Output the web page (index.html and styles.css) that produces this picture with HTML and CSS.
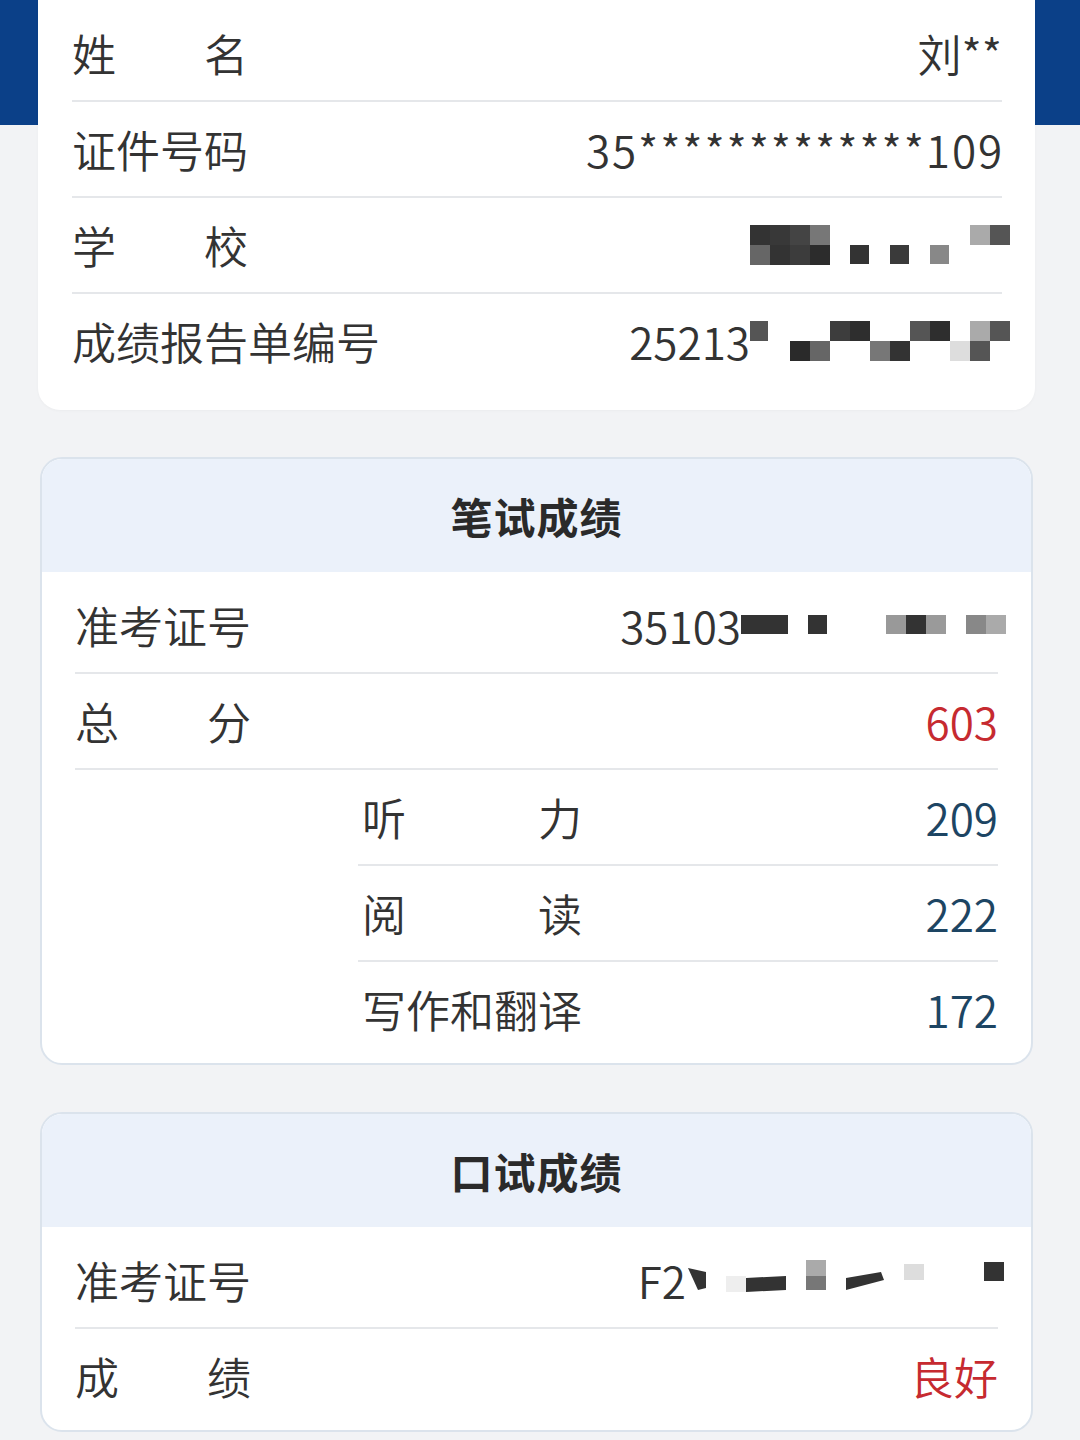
FILE: index.html
```html
<!DOCTYPE html>
<html lang="zh-CN">
<head>
<meta charset="utf-8">
<title>成绩查询</title>
<link rel="stylesheet" href="styles.css">
</head>
<body>
<div class="page">
  <section class="card card-info">
    <div class="row">
      <div class="lbl w4"><span>姓</span><span>名</span></div>
      <div class="val">刘**</div>
    </div>
    <div class="row">
      <div class="lbl">证件号码</div>
      <div class="val idno">35*************109</div>
    </div>
    <div class="row">
      <div class="lbl w4"><span>学</span><span>校</span></div>
      <div class="val">
        <svg class="mosaic" width="260" height="40" viewBox="0 0 260 40">
          <rect x="0" y="0" width="20" height="20" fill="#333"/>
          <rect x="20" y="0" width="20" height="20" fill="#383838"/>
          <rect x="40" y="0" width="20" height="20" fill="#444"/>
          <rect x="60" y="0" width="20" height="20" fill="#777"/>
          <rect x="220" y="0" width="20" height="20" fill="#aaa"/>
          <rect x="240" y="0" width="20" height="20" fill="#555"/>
          <rect x="0" y="20" width="20" height="20" fill="#666"/>
          <rect x="20" y="20" width="20" height="20" fill="#333"/>
          <rect x="40" y="20" width="20" height="20" fill="#3c3c3c"/>
          <rect x="60" y="20" width="20" height="20" fill="#2c2c2c"/>
          <rect x="100" y="20" width="19" height="19" fill="#333"/>
          <rect x="140" y="20" width="19" height="19" fill="#3a3a3a"/>
          <rect x="180" y="20" width="19" height="19" fill="#888"/>
        </svg>
      </div>
    </div>
    <div class="row">
      <div class="lbl">成绩报告单编号</div>
      <div class="val">25213<svg class="mosaic" width="260" height="40" viewBox="0 0 260 40">
          <rect x="0" y="0" width="18" height="20" fill="#555"/>
          <rect x="40" y="20" width="20" height="20" fill="#2a2a2a"/>
          <rect x="60" y="20" width="20" height="20" fill="#666"/>
          <rect x="80" y="0" width="20" height="20" fill="#3d3d3d"/>
          <rect x="100" y="0" width="20" height="20" fill="#2e2e2e"/>
          <rect x="120" y="20" width="20" height="20" fill="#777"/>
          <rect x="140" y="20" width="20" height="20" fill="#333"/>
          <rect x="160" y="0" width="20" height="20" fill="#555"/>
          <rect x="180" y="0" width="20" height="20" fill="#2e2e2e"/>
          <rect x="200" y="20" width="20" height="20" fill="#ddd"/>
          <rect x="220" y="0" width="20" height="20" fill="#aaa"/>
          <rect x="220" y="20" width="20" height="20" fill="#555"/>
          <rect x="240" y="0" width="20" height="20" fill="#555"/>
        </svg></div>
    </div>
  </section>

  <section class="card card-score">
    <header class="card-head">笔试成绩</header>
    <div class="card-body">
      <div class="row">
        <div class="lbl">准考证号</div>
        <div class="val">35103<svg class="mosaic" width="265" height="24" viewBox="0 0 265 24">
            <rect x="0" y="2" width="47" height="19" fill="#333"/>
            <rect x="67" y="2" width="19" height="19" fill="#333"/>
            <rect x="145" y="2" width="20" height="19" fill="#999"/>
            <rect x="165" y="2" width="20" height="19" fill="#333"/>
            <rect x="185" y="2" width="20" height="19" fill="#9a9a9a"/>
            <rect x="225" y="2" width="20" height="19" fill="#888"/>
            <rect x="245" y="2" width="20" height="19" fill="#aaa"/>
          </svg></div>
      </div>
      <div class="row">
        <div class="lbl w4"><span>总</span><span>分</span></div>
        <div class="val red">603</div>
      </div>
      <div class="sub">
        <div class="row">
          <div class="lbl w5"><span>听</span><span>力</span></div>
          <div class="val blue">209</div>
        </div>
        <div class="row">
          <div class="lbl w5"><span>阅</span><span>读</span></div>
          <div class="val blue">222</div>
        </div>
        <div class="row">
          <div class="lbl">写作和翻译</div>
          <div class="val blue">172</div>
        </div>
      </div>
    </div>
  </section>

  <section class="card card-score">
    <header class="card-head">口试成绩</header>
    <div class="card-body">
      <div class="row">
        <div class="lbl">准考证号</div>
        <div class="val">F2<svg class="mosaic" width="320" height="40" viewBox="0 0 320 40">
            <polygon points="2,8 20,12 20,28 12,30" fill="#333"/>
            <rect x="40" y="16" width="20" height="16" fill="#eee"/>
            <polygon points="60,18 100,16 100,30 60,32" fill="#333"/>
            <rect x="120" y="0" width="20" height="16" fill="#aaa"/>
            <rect x="120" y="16" width="20" height="14" fill="#777"/>
            <polygon points="160,18 195,12 198,20 160,30" fill="#333"/>
            <rect x="218" y="4" width="20" height="16" fill="#ddd"/>
            <rect x="298" y="2" width="20" height="19" fill="#333"/>
          </svg></div>
      </div>
      <div class="row">
        <div class="lbl w4"><span>成</span><span>绩</span></div>
        <div class="val red">良好</div>
      </div>
    </div>
  </section>
</div>
</body>
</html>
```

FILE: styles.css
```css
html, body {
  margin: 0;
  padding: 0;
}

body {
  background: linear-gradient(#0b4088 0, #0b4088 125px, #f2f3f5 125px);
  font-family: "Noto Sans CJK SC", "Noto Sans", sans-serif;
  color: #333;
  width: 1080px;
  min-height: 1440px;
}

.page {
  display: flex;
  flex-direction: column;
  padding-bottom: 40px;
}

.card {
  background: #fff;
}

.card-info {
  margin: 0 45px 0 38px;
  padding: 6px 33px 22px 34px;
  border-radius: 0 0 22px 22px;
  box-shadow: 0 1px 3px rgba(0, 0, 0, 0.03);
}

.card-score {
  margin: 47px 47px 0 40px;
  border: 2px solid #dbe3ec;
  border-radius: 22px;
  overflow: hidden;
}

.card-head {
  height: 113px;
  background: #ebf1fa;
  display: flex;
  align-items: center;
  justify-content: center;
  font-size: 42px;
  font-weight: 700;
  color: #2a2a2a;
  letter-spacing: 1px;
}

.card-body {
  padding: 6px 33px 7px 33px;
}

.row {
  height: 94px;
  display: flex;
  align-items: center;
  justify-content: space-between;
  border-bottom: 2px solid #e5e7ea;
  font-size: 44px;
}

.card-info .row:last-child,
.card-body > .row:last-child,
.sub .row:last-child {
  border-bottom: none;
}

.sub {
  margin-left: 283px;
}

.lbl {
  display: flex;
  justify-content: space-between;
  line-height: 1;
  color: #333;
  font-weight: 350;
}

.lbl.w4 {
  width: 176px;
}

.lbl.w5 {
  width: 220px;
  margin-left: 4px;
}

.sub .lbl {
  margin-left: 4px;
}

.val {
  display: flex;
  align-items: center;
  line-height: 1;
  color: #333;
  font-weight: 350;
}

.idno {
  letter-spacing: 1.9px;
  margin-right: -2px;
}

.mosaic {
  display: block;
  margin-right: -8px;
}

.red {
  color: #c62a30;
}

.blue {
  color: #1d4563;
}
```
